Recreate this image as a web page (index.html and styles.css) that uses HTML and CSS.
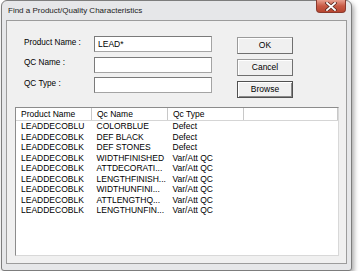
FILE: index.html
```html
<!DOCTYPE html>
<html lang="en">
<head>
<meta charset="UTF-8">
<title>Find a Product/Quality Characteristics</title>
<link rel="stylesheet" href="styles.css">
</head>
<body>
    <div class="window">
        <div class="titlebar">
            <span class="title">Find a Product/Quality Characteristics</span>
            <span class="close">
                <svg width="12" height="9" viewBox="0 0 12 9">
                    <path d="M2 1 L10 8 M10 1 L2 8" stroke="#5a2a22" stroke-width="3.4" stroke-linecap="square"/>
                    <path d="M2 1 L10 8 M10 1 L2 8" stroke="#fff" stroke-width="1.8" stroke-linecap="square"/>
                </svg>
            </span>
        </div>
        <div class="client">
            <div class="top">
                <div class="fields">
                    <label>Product Name :</label>
                    <div class="input">LEAD*</div>
                    <label>QC Name :</label>
                    <div class="input"></div>
                    <label>QC Type :</label>
                    <div class="input"></div>
                </div>
                <div class="buttons">
                    <div class="btn">OK</div>
                    <div class="btn">Cancel</div>
                    <div class="btn default">Browse</div>
                </div>
            </div>
            <div class="list">
                <table>
                    <tr class="head">
                        <td class="c1">Product Name</td>
                        <td class="c2">Qc Name</td>
                        <td class="c3">Qc Type</td>
                        <td class="c4"></td>
                    </tr>
                    <tr><td>LEADDECOBLU</td><td>COLORBLUE</td><td>Defect</td><td></td></tr>
                    <tr><td>LEADDECOBLK</td><td>DEF BLACK</td><td>Defect</td><td></td></tr>
                    <tr><td>LEADDECOBLK</td><td>DEF STONES</td><td>Defect</td><td></td></tr>
                    <tr><td>LEADDECOBLK</td><td>WIDTHFINISHED</td><td>Var/Att QC</td><td></td></tr>
                    <tr><td>LEADDECOBLK</td><td>ATTDECORATI...</td><td>Var/Att QC</td><td></td></tr>
                    <tr><td>LEADDECOBLK</td><td>LENGTHFINISH...</td><td>Var/Att QC</td><td></td></tr>
                    <tr><td>LEADDECOBLK</td><td>WIDTHUNFINI...</td><td>Var/Att QC</td><td></td></tr>
                    <tr><td>LEADDECOBLK</td><td>ATTLENGTHQ...</td><td>Var/Att QC</td><td></td></tr>
                    <tr><td>LEADDECOBLK</td><td>LENGTHUNFIN...</td><td>Var/Att QC</td><td></td></tr>
                </table>
            </div>
        </div>
    </div>
</body>
</html>
```

FILE: styles.css
```css
body {
    margin: 0;
    padding: 0 0 0 1px;
    background: #fff;
    font-family: "Liberation Sans", Arial, sans-serif;
    font-size: 8px;
    color: #000;
}
.window {
    width: 351px;
    height: 271px;
    box-sizing: border-box;
    border: 1px solid #7d7d7d;
    border-radius: 6px 6px 3px 3px;
    background: #e6e7e9;
    box-shadow: 2px 3px 5px rgba(0, 0, 0, 0.35);
    display: flex;
    flex-direction: column;
}
.titlebar {
    height: 19px;
    display: flex;
    align-items: flex-start;
    padding-left: 6px;
}
.title {
    margin-top: 5px;
    font-size: 8px;
    color: #222;
}
.close {
    margin-left: auto;
    margin-right: 5px;
    margin-top: -1px;
    width: 30px;
    height: 13px;
    border: 1px solid #8a3a2e;
    border-top: none;
    border-radius: 0 0 4px 4px;
    background: linear-gradient(#e8a090, #c85a45 50%, #b84530);
    display: flex;
    align-items: center;
    justify-content: center;
    box-sizing: border-box;
}
.client {
    flex: 1;
    margin: 0 4px 6px 4px;
    border: 1px solid #9c9c9c;
    background: #f0f0f0;
    display: flex;
    flex-direction: column;
    padding: 15px 7px 7px 8px;
}
.top {
    display: flex;
    height: 71px;
}
.fields {
    display: grid;
    grid-template-columns: 70px 118px;
    grid-auto-rows: 16px;
    row-gap: 4.5px;
    padding-left: 9px;
    align-items: center;
}
.fields label {
    font-size: 8.2px;
    padding-bottom: 4px;
}
.input {
    height: 16px;
    box-sizing: border-box;
    border: 1px solid #a4a4a4;
    border-top-color: #7a7a7a;
    border-left-color: #7a7a7a;
    background: #fff;
    padding: 2px 0 0 3px;
    font-size: 8.5px;
}
.buttons {
    margin-left: 25px;
    display: flex;
    flex-direction: column;
    gap: 5px;
    padding-top: 1px;
}
.btn {
    width: 56px;
    height: 17px;
    box-sizing: border-box;
    border: 1px solid #9a9a9a;
    border-right-color: #6f6f6f;
    border-bottom-color: #6f6f6f;
    background: #f0f0f0;
    box-shadow: inset 1px 1px 0 #fff;
    text-align: center;
    line-height: 15px;
    font-size: 8.5px;
}
.btn.default {
    border: 1px solid #505050;
    box-shadow: inset 1px 1px 0 #fff, inset -1px -1px 0 #8a8a8a;
}
.list {
    flex: 1;
    border: 1px solid #8c8c8c;
    border-right-color: #d8d8d8;
    border-bottom-color: #d8d8d8;
    background: #fff;
    overflow: hidden;
}
table {
    border-collapse: collapse;
    width: 100%;
}
td {
    padding: 0 0 0 5px;
    height: 10.5px;
    line-height: 10.5px;
    font-size: 8.5px;
    white-space: nowrap;
}
.head td {
    height: 12px;
    line-height: 12px;
    border-right: 1px solid #c8c8c8;
    border-bottom: 1px solid #d5d5d5;
    background: #fff;
}
.c1 { width: 70px; }
.c2 { width: 70px; }
.c3 { width: 70px; }
```
